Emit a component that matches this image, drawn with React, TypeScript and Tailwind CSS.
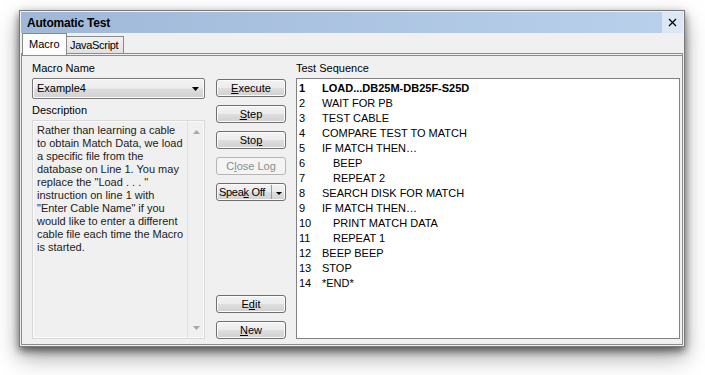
import React from 'react';

const font = "font-['Liberation_Sans',Arial,sans-serif]";

const btnFace =
  'bg-[linear-gradient(#f3f3f3,#ececec_48%,#dedede_52%,#d0d0d0)] shadow-[inset_0_0_0_1px_#fbfbfb]';

const descLines = [
  'Rather than learning a cable',
  'to obtain Match Data, we load',
  'a specific file from the',
  'database on Line 1. You may',
  'replace the "Load . . . "',
  'instruction on line 1 with',
  '"Enter Cable Name" if you',
  'would like to enter a different',
  'cable file each time the Macro',
  'is started.',
];

const steps: { text: string; indent?: boolean; bold?: boolean }[] = [
  { text: 'LOAD...DB25M-DB25F-S25D', bold: true },
  { text: 'WAIT FOR PB' },
  { text: 'TEST CABLE' },
  { text: 'COMPARE TEST TO MATCH' },
  { text: 'IF MATCH THEN\u2026' },
  { text: 'BEEP', indent: true },
  { text: 'REPEAT 2', indent: true },
  { text: 'SEARCH DISK FOR MATCH' },
  { text: 'IF MATCH THEN\u2026' },
  { text: 'PRINT MATCH DATA', indent: true },
  { text: 'REPEAT 1', indent: true },
  { text: 'BEEP BEEP' },
  { text: 'STOP' },
  { text: '*END*' },
];

function Btn({ pre, u, post, disabled }: { pre: string; u: string; post: string; disabled?: boolean }) {
  return (
    <div
      className={`h-[18px] w-[70px] rounded-[3px] border flex items-center justify-center text-[11px] leading-none ${
        disabled
          ? 'border-[#b5b5b5] bg-[#f4f4f4] text-[#8d8d8d]'
          : `border-[#707070] text-black ${btnFace}`
      }`}
    >
      <span>
        {pre}
        <span className="underline underline-offset-[1px]">{u}</span>
        {post}
      </span>
    </div>
  );
}

function Tri({ up, color = '#000', w = 7 }: { up?: boolean; color?: string; w?: number }) {
  const h = Math.ceil(w / 2);
  return (
    <svg width={w} height={h} viewBox={`0 0 ${w} ${h}`}>
      <polygon points={up ? `0,${h} ${w},${h} ${w / 2},0` : `0,0 ${w},0 ${w / 2},${h}`} fill={color} />
    </svg>
  );
}

export default function App() {
  return (
    <div className={`w-[705px] h-[375px] bg-white overflow-hidden ${font}`}>
      <div className="ml-[19px] mt-[10px] w-[666px] h-[337px] border border-[#7a7a7a] bg-[#f0f0f0] p-px flex flex-col shadow-[0_4px_8px_rgba(0,0,0,0.55),0_10px_22px_rgba(0,0,0,0.35)]">
        {/* title bar */}
        <div className="h-[21px] flex items-center bg-[linear-gradient(to_right,#9fb8d8,#b9d1eb)]">
          <span className="pl-[6px] text-[12px] font-bold text-black tracking-[-0.2px]">Automatic Test</span>
          <div className="ml-auto h-full w-[21px] bg-[#dbe7f4] flex items-center justify-center">
            <svg width="9" height="9" viewBox="0 0 9 9">
              <path d="M1 1 L8 8 M8 1 L1 8" stroke="#000" strokeWidth="1.25" />
            </svg>
          </div>
        </div>

        {/* tabs */}
        <div className="h-[20px] flex items-end pl-px">
          <div className="relative z-10 -mb-[2px] h-[22px] w-[45px] border border-b-0 border-[#898989] bg-[#fcfcfc] pl-[6px] pt-[4px] text-[11px] leading-[13px] text-black">
            Macro
          </div>
          <div className="h-[17px] w-[57px] border border-l-0 border-b-0 border-[#898989] bg-[linear-gradient(#f2f2f2,#e1e1e1)] pl-[3px] pt-[2px] text-[11px] leading-[13px] tracking-[-0.3px] text-black whitespace-nowrap overflow-hidden">
            JavaScript
          </div>
        </div>

        {/* panel */}
        <div className="flex-1 flex border-t-[3px] border-double border-x border-b border-[#8c8c8c] pl-[10px] pr-[2px] pt-[6px] pb-[5px] text-[11px] text-black">
          {/* left column */}
          <div className="w-[173px] flex flex-col">
            <div className="h-[13px] leading-[13px]">Macro Name</div>
            <div className={`mt-[3px] h-[21px] rounded-[2px] border border-[#7a7a7a] flex items-center pl-[4px] pr-[5px] ${btnFace}`}>
              <span className="leading-none">Example4</span>
              <div className="ml-auto">
                <Tri />
              </div>
            </div>
            <div className="mt-[5px] h-[13px] leading-[13px]">Description</div>
            <div className="mt-[3px] flex-1 flex border border-[#d9d9d9] shadow-[inset_0_0_0_1px_#fafafa]">
              <div className="flex-1 pl-[4px] pt-[3px] text-[#1b1b1b] leading-[13px] whitespace-nowrap">
                {descLines.map((l, i) => (
                  <div key={i}>{l}</div>
                ))}
              </div>
              <div className="w-[17px] border-l border-[#e2e2e2] flex flex-col items-center justify-between pt-[9px] pb-[8px]">
                <Tri up color="#a8a8a8" />
                <Tri color="#a8a8a8" />
              </div>
            </div>
          </div>

          {/* button column */}
          <div className="ml-[11px] w-[70px] flex flex-col gap-[8px] pt-[17px]">
            <Btn pre="" u="E" post="xecute" />
            <Btn pre="" u="S" post="tep" />
            <Btn pre="Sto" u="p" post="" />
            <Btn pre="C" u="l" post="ose Log" disabled />
            <div className={`h-[18px] w-[70px] rounded-[3px] border border-[#707070] flex items-center text-[11px] leading-none ${btnFace}`}>
              <span className="pl-[2px] tracking-[-0.3px] whitespace-nowrap">
                Spea<span className="underline underline-offset-[1px]">k</span> Off
              </span>
              <div className="ml-auto h-[14px] w-px bg-[#9a9a9a]" />
              <div className="w-[13px] flex items-center justify-center pt-[3px]">
                <Tri w={6} />
              </div>
            </div>
            <div className="flex-1" />
            <Btn pre="E" u="d" post="it" />
            <Btn pre="" u="N" post="ew" />
          </div>

          {/* test sequence */}
          <div className="ml-[10px] flex-1 flex flex-col">
            <div className="h-[13px] leading-[13px]">Test Sequence</div>
            <div className="mt-[3px] flex-1 border border-[#828282] bg-white pl-[2px] pt-[2px]">
              {steps.map((s, i) => (
                <div key={i} className={`flex h-[15px] leading-[15px] ${s.bold ? 'font-bold' : ''}`}>
                  <span className="w-[23px]">{i + 1}</span>
                  <span className={s.indent ? 'pl-[11px]' : ''}>{s.text}</span>
                </div>
              ))}
            </div>
          </div>
        </div>
      </div>
    </div>
  );
}
